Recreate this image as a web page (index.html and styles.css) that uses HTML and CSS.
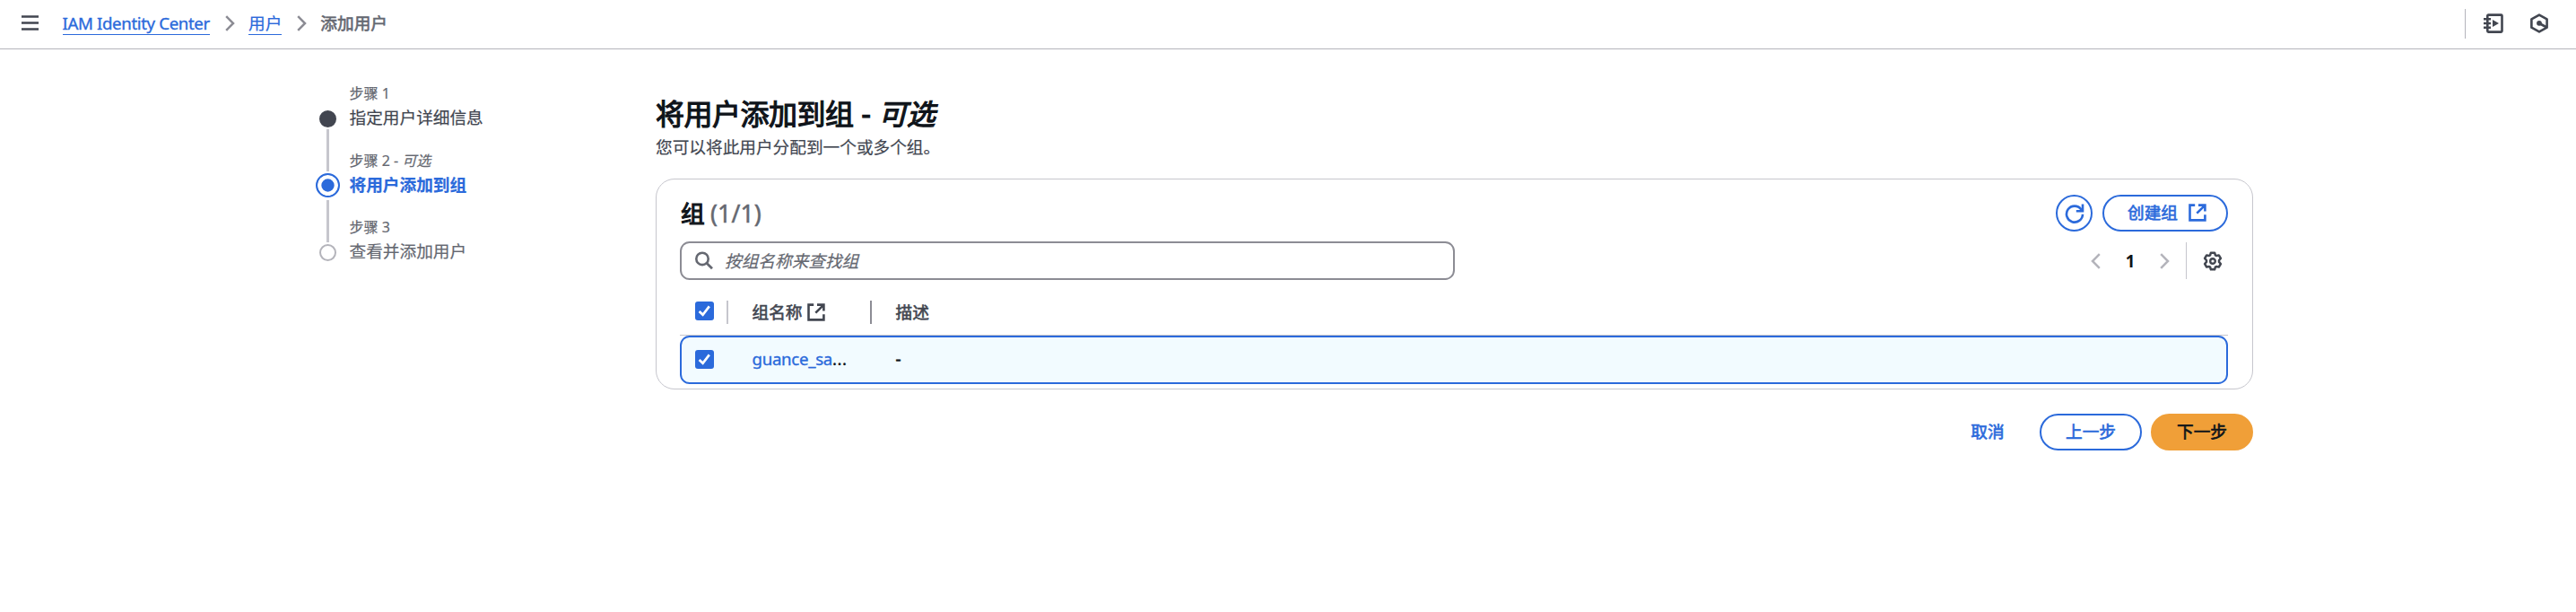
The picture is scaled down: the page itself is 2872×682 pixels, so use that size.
FILE: index.html
```html
<!DOCTYPE html>
<html lang="zh-CN">
<head>
<meta charset="utf-8">
<title>添加用户</title>
<link rel="stylesheet" href="styles.css">
</head>
<body>
<header class="topbar">
  <svg class="menu-icon" width="19" height="17" viewBox="0 0 19 17"><path d="M0 1.5H19M0 8.5H19M0 15.5H19" stroke="#424650" stroke-width="2.6"/></svg>
  <nav class="crumbs">
    <a class="crumb latin">IAM Identity Center</a>
    <svg class="sep" width="11" height="18" viewBox="0 0 11 18"><path d="M1.2 1.2L9 9L1.2 16.8" fill="none" stroke="#8c8c94" stroke-width="2.5"/></svg>
    <a class="crumb">用户</a>
    <svg class="sep" width="11" height="18" viewBox="0 0 11 18"><path d="M1.2 1.2L9 9L1.2 16.8" fill="none" stroke="#8c8c94" stroke-width="2.5"/></svg>
    <span class="crumb-current">添加用户</span>
  </nav>
  <div class="tools">
    <svg width="22" height="22" viewBox="0 0 22 22"><rect x="4.3" y="1.6" width="16.2" height="19" rx="1" fill="none" stroke="#424650" stroke-width="2.6"/><path d="M0 6.2H8M0 11H8M0 15.8H8" stroke="#424650" stroke-width="2.4"/><path d="M10 7L17 11L10 15Z" fill="#424650"/></svg>
    <svg width="20" height="22" viewBox="0 0 20 22"><path d="M10 1.6L18.6 6.3V15.7L10 20.4L1.4 15.7V6.3Z" fill="none" stroke="#424650" stroke-width="2.6" stroke-linejoin="round"/><circle cx="10" cy="10.8" r="2.9" fill="#424650"/><path d="M10 11L18 15.2" stroke="#424650" stroke-width="2.7"/></svg>
  </div>
</header>
<div class="page">
  <ol class="steps">
    <li class="step done">
      <span class="rail"><i class="dot"></i><i class="line"></i></span>
      <div><p class="step-no">步骤 1</p><p class="step-name">指定用户详细信息</p></div>
    </li>
    <li class="step active">
      <span class="rail"><i class="dot"></i><i class="line"></i></span>
      <div><p class="step-no">步骤 2 - <em>可选</em></p><p class="step-name">将用户添加到组</p></div>
    </li>
    <li class="step">
      <span class="rail"><i class="dot"></i></span>
      <div><p class="step-no">步骤 3</p><p class="step-name">查看并添加用户</p></div>
    </li>
  </ol>
  <main class="main">
    <h1 class="title">将用户添加到组 - <em>可选</em></h1>
    <p class="desc">您可以将此用户分配到一个或多个组。</p>
    <section class="card">
      <div class="card-head">
        <h2 class="card-title">组 <span class="count">(1/1)</span></h2>
        <div class="actions">
          <button class="btn round"><svg width="22" height="22" viewBox="0 0 22 22"><path d="M20 11.7A9 9 0 1 1 18.2 6.2L19.3 8" fill="none" stroke="#2b6adb" stroke-width="2.6"/><path d="M20 .5V8.2H12.8" fill="none" stroke="#2b6adb" stroke-width="2.6"/></svg></button>
          <button class="btn create">创建组<svg width="20" height="20" viewBox="0 0 20 20"><path d="M7.2 1.6H1.5V18.4H18.4V12.2M11 1.6H18.4V8.6M18.2 1.8L9.3 10.7" fill="none" stroke="#2b6adb" stroke-width="2.6"/></svg></button>
        </div>
      </div>
      <div class="filters">
        <div class="search">
          <svg width="20" height="21" viewBox="0 0 20 21"><circle cx="8" cy="8.4" r="6.7" fill="none" stroke="#656871" stroke-width="2.6"/><path d="M12.6 13.1L19 19.3" stroke="#656871" stroke-width="2.8"/></svg>
          <span>按组名称来查找组</span>
        </div>
        <div class="pager">
          <svg width="11" height="18" viewBox="0 0 11 18"><path d="M9.8 1.2L2 9L9.8 16.8" fill="none" stroke="#b4b4bb" stroke-width="2.5"/></svg>
          <b class="page-no">1</b>
          <svg width="11" height="18" viewBox="0 0 11 18"><path d="M1.2 1.2L9 9L1.2 16.8" fill="none" stroke="#b4b4bb" stroke-width="2.5"/></svg>
          <i class="bar"></i>
          <svg width="22" height="22" viewBox="0 0 22 22"><path d="M8.9 1.7H13.1L13.9 4.4L15 5L17.8 4.4L19.9 8L18 10.1V11.9L19.9 14L17.8 17.6L15 17L13.9 17.6L13.1 20.3H8.9L8.1 17.6L7 17L4.2 17.6L2.1 14L4 11.9V10.1L2.1 8L4.2 4.4L7 5L8.1 4.4Z" fill="none" stroke="#424650" stroke-width="2.5" stroke-linejoin="round"/><circle cx="11" cy="11" r="2.8" fill="none" stroke="#424650" stroke-width="2.4"/></svg>
        </div>
      </div>
      <div class="row head">
        <span class="check"><svg width="21" height="21" viewBox="0 0 21 21"><path d="M4.6 11L8.6 14.8L15.8 5.4" fill="none" stroke="#fff" stroke-width="2.7"/></svg></span>
        <i class="colbar light"></i>
        <span class="col-name">组名称<svg width="20" height="20" viewBox="0 0 20 20"><path d="M7.2 1.6H1.5V18.4H18.4V12.2M11 1.6H18.4V8.6M18.2 1.8L9.3 10.7" fill="none" stroke="#424650" stroke-width="2.6"/></svg></span>
        <i class="colbar"></i>
        <span class="col-desc">描述</span>
      </div>
      <div class="row selected">
        <span class="check"><svg width="21" height="21" viewBox="0 0 21 21"><path d="M4.6 11L8.6 14.8L15.8 5.4" fill="none" stroke="#fff" stroke-width="2.7"/></svg></span>
        <span class="cell-name"><a>guance_sa</a><span class="dots">...</span></span>
        <span class="cell-desc">-</span>
      </div>
    </section>
    <footer class="footer">
      <button class="btn link">取消</button>
      <button class="btn wide">上一步</button>
      <button class="btn wide primary">下一步</button>
    </footer>
  </main>
</div>
</body>
</html>
```
FILE: styles.css
```css
* { box-sizing: border-box; margin: 0; padding: 0; }
body {
  background: #fff;
  color: #0f141a;
  font: 18.67px/26px "Noto Sans", "Noto Sans CJK SC", sans-serif;
  overflow: hidden;
}
svg { display: block; flex: none; }
i { display: block; flex: none; }
p, span, a, h1, h2, button { white-space: nowrap; }

.topbar {
  display: flex;
  align-items: flex-start;
  height: 55px;
  padding-left: 24px;
  border-bottom: 1px solid #b4b4bb;
}
.menu-icon { margin-top: 17px; }
.crumbs { display: flex; align-items: flex-start; margin-left: 26.5px; padding-top: 13px; }
.crumb { height: 26px; color: #2b6adb; border-bottom: 1px solid #2b6adb; -webkit-text-stroke: .2px; }
.latin { width: 164.5px; letter-spacing: -.37px; -webkit-text-stroke: .35px; }
.sep { margin: 4px 15px 0 17px; }
.crumb-current { color: #656871; -webkit-text-stroke: .6px; }
.tools {
  display: flex;
  align-items: center;
  gap: 30px;
  width: 124px;
  height: 33px;
  margin: 10px 0 0 auto;
  padding-left: 20px;
  border-left: 1px solid #b4b4bb;
}
.tools svg { position: relative; top: -1px; }

.page { display: flex; }
.steps { width: 379px; margin-left: 352px; padding-top: 35px; list-style: none; }
.step { display: flex; height: 74.5px; color: #656871; -webkit-text-stroke: .2px; }
.rail { display: flex; flex-direction: column; align-items: center; width: 27px; margin-right: 10.5px; padding-top: 32.5px; }
.dot { width: 19px; height: 19px; border: 2.67px solid #b4b4bb; border-radius: 50%; }
.line { width: 3px; height: 47px; margin-top: 2.5px; background: #c6c6cd; }
.step-no { height: 28px; font-size: 16px; line-height: 28px; }
.step-name { height: 26px; }
.done .dot { background: #424650; border-color: #424650; }
.done .step-name { color: #424650; }
.active .rail { padding-top: 28.5px; }
.active .dot { width: 27px; height: 27px; border-color: #2b6adb; background: #2b6adb; box-shadow: inset 0 0 0 4.3px #fff; }
.active .line { margin-top: 3px; }
.active .step-name { color: #2b6adb; font-weight: 700; }

.main { width: 1781px; padding-top: 51px; }
.title { height: 44px; font-size: 32px; line-height: 42px; font-weight: 400; -webkit-text-stroke: 1.2px; letter-spacing: -.5px; word-spacing: 1.2px; }
.desc { height: 49px; color: #424650; line-height: 28px; -webkit-text-stroke: .2px; }
.card { height: 235px; padding: 17px 27px 0 26px; border: 1px solid #c6c6cd; border-radius: 21px; }
.card-head { display: flex; justify-content: space-between; height: 41px; }
.card-title { padding-left: 1px; font-size: 26.67px; line-height: 41px; font-weight: 400; -webkit-text-stroke: 1.1px; letter-spacing: -.3px; }
.count { color: #656871; letter-spacing: .1px; -webkit-text-stroke: .5px; }
.actions { display: flex; gap: 11px; }
.btn {
  display: flex;
  align-items: center;
  justify-content: center;
  height: 41px;
  padding-bottom: 1px;
  border: 2px solid #2b6adb;
  border-radius: 21px;
  background: #fff;
  color: #2b6adb;
  font: inherit;
  -webkit-text-stroke: .65px;
}
.round { width: 41px; padding: 0; }
.create { gap: 12px; width: 140px; padding-left: 4px; }
.filters { display: flex; justify-content: space-between; height: 43px; margin-top: 11px; }
.search {
  display: flex;
  align-items: center;
  gap: 13px;
  width: 864px;
  padding-left: 15px;
  border: 2px solid #8c8c94;
  border-radius: 10.67px;
  color: #656871;
  font-style: italic;
  -webkit-text-stroke: .2px;
}
.pager { display: flex; align-items: center; padding-right: 6px; }
.page-no { width: 66px; text-align: center; }
.bar { width: 1px; height: 41px; margin: 0 18px; background: #c6c6cd; }

.row { display: flex; align-items: center; }
.check { width: 21px; height: 21px; border-radius: 3px; background: #2b6adb; }
.head { height: 62px; padding: 0 0 12px 17px; border-bottom: 1px solid #c6c6cd; align-items: flex-end; color: #424650; -webkit-text-stroke: .6px; }
.head .check { margin-bottom: 4px; }
.colbar { width: 2px; height: 26px; background: #8c8c94; }
.light { margin-left: 14px; background: #c6c6cd; }
.col-name { display: flex; align-items: center; gap: 6px; width: 158px; padding-left: 26.5px; }
.col-desc { padding-left: 26.5px; }
.selected { height: 54px; padding: 0 15px 2px; border: 2px solid #2b6adb; border-radius: 10.67px; background: #f2fbff; }
.cell-name { width: 160px; margin-left: 42.5px; -webkit-text-stroke: .35px; letter-spacing: -.3px; }
.cell-name a { color: #2b6adb; }
.dots { letter-spacing: .5px; }
.cell-desc { -webkit-text-stroke: .6px; }
.footer { display: flex; justify-content: flex-end; gap: 10px; margin-top: 27px; }
.wide { width: 114px; }
.link { width: 96px; border-color: transparent; }
.primary { border-color: #f09f38; background: #f09f38; color: #0f141a; }
```
